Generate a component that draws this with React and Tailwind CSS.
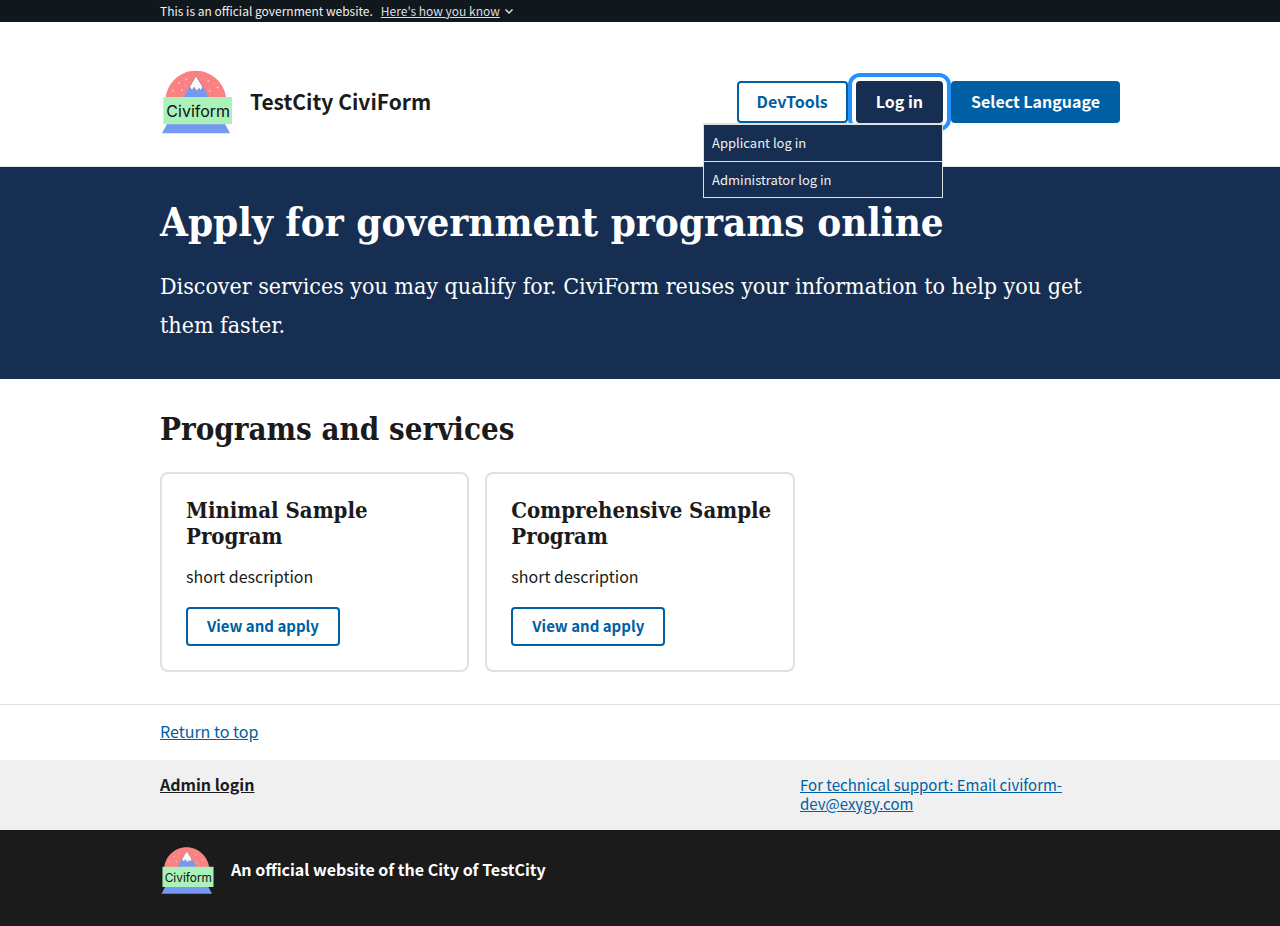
import React from "react";

const sans = "font-['Noto_Sans_CJK_SC',sans-serif]";
const serif = "font-['DejaVu_Serif_Condensed','DejaVu_Serif',serif]";

function Logo({ className }) {
  return (
    <svg viewBox="30 24 222 204" className={className} role="img" aria-label="Civiform logo">
      <path d="M46 124C46 73 87 32 137 32s92 41 92 92z" fill="#fa8283" />
      <path d="M101 111 L121 74 L156 74 L176 111z" fill="#7599f3" />
      <path
        d="M138 47 L119 80 L122 87 L127 90 L132 82 L141 94 L147 85 L153 92 L158 80z"
        fill="#fafafa"
        stroke="#6d6480"
        strokeWidth="1.5"
      />
      <g fill="#fcd9d6">
        <circle cx="109" cy="58" r="2.6" />
        <circle cx="87" cy="69" r="2.6" />
        <circle cx="106" cy="75" r="1.6" />
        <circle cx="69" cy="92" r="2.6" />
        <circle cx="96" cy="91" r="2.6" />
        <circle cx="175" cy="63" r="2.6" />
        <circle cx="203" cy="82" r="2.6" />
        <circle cx="179" cy="93" r="2.6" />
        <circle cx="192" cy="70" r="1.4" />
      </g>
      <path d="M51 192H225L240 220H36z" fill="#7599f3" />
      <path d="M40 111H246V193H40z" fill="#aaf2ba" />
      <text x="49" y="172" fontSize="48" fill="#111" className="font-['Inter',sans-serif]">
        Civiform
      </text>
    </svg>
  );
}

function ProgramCard({ title }) {
  return (
    <li className="flex flex-col items-start rounded-lg border-2 border-[#dfe1e2] pt-[23px] pr-5 pb-6 pl-6">
      <h3 className={`${serif} text-[22px] leading-[26px] font-bold`}>{title}</h3>
      <p className="mt-[15px] text-[16px] leading-6">short description</p>
      <a
        href="#apply"
        className="mt-[19px] rounded border-2 border-[#005ea2] px-[19px] pt-[7px] pb-[9px] text-[15px] leading-[19px] font-bold text-[#005ea2]"
      >
        View and apply
      </a>
    </li>
  );
}

export default function App() {
  return (
    <div id="top" className={`${sans} bg-white text-[#1b1b1b]`}>
      <div className="bg-[#11181d] text-[#f0f0f0]">
        <div className="mx-auto flex max-w-5xl items-center gap-2 px-8 text-[12px] leading-[22px]">
          <p>This is an official government website.</p>
          <button type="button" className="flex items-center gap-1 text-[#dcdee0]">
            <span className="underline">Here's how you know</span>
            <svg viewBox="0 0 10 10" className="size-[10px]" fill="none" stroke="currentColor" strokeWidth="1.5" aria-hidden="true">
              <path d="M1.5 3.5 5 7 8.5 3.5" />
            </svg>
          </button>
        </div>
      </div>

      <header className="border-b border-[#dfe1e2]">
        <div className="mx-auto flex max-w-5xl items-center justify-between px-8 pt-[46px] pb-[30px]">
          <a href="#home" className="flex items-center gap-4">
            <Logo className="h-[68px] w-[74px]" />
            <span className="pb-0.5 text-[21px] leading-8 font-bold">TestCity CiviForm</span>
          </a>
          <nav className="flex gap-2 text-[16px] leading-[18px] font-bold">
            <button type="button" className="rounded border-2 border-[#005ea2] px-[18px] pt-[9px] pb-[11px] text-[#005ea2]">
              DevTools
            </button>
            <div className="relative">
              <button
                type="button"
                aria-expanded="true"
                className="rounded bg-[#162e51] px-5 pt-[11px] pb-[13px] text-white outline-4 outline-offset-4 outline-[#2491ff]"
              >
                Log in
              </button>
              <ul className="absolute top-full right-0 z-10 w-60 border border-t-2 border-[#dfe1e2] bg-[#162e51] text-[13px] leading-5 font-normal text-[#f0f0f0]">
                <li className="border-b border-[#dfe1e2]">
                  <a href="#applicant" className="block p-2">Applicant log in</a>
                </li>
                <li>
                  <a href="#administrator" className="block px-2 pt-2 pb-[7px]">Administrator log in</a>
                </li>
              </ul>
            </div>
            <button type="button" className="rounded bg-[#005ea2] px-5 pt-[11px] pb-[13px] text-white">
              Select Language
            </button>
          </nav>
        </div>
      </header>

      <main>
        <section className={`${serif} bg-[#162e51] text-white`}>
          <div className="mx-auto max-w-5xl px-8 pt-8 pb-[34px]">
            <h1 className="text-[40px] leading-[46px] font-bold">Apply for government programs online</h1>
            <p className="mt-[22px] text-[23px] leading-[39px]">
              Discover services you may qualify for. CiviForm reuses your information to help you get them faster.
            </p>
          </div>
        </section>

        <section className="mx-auto max-w-5xl px-8 pt-8 pb-8">
          <h2 className={`${serif} text-[31px] leading-[37px] font-bold`}>Programs and services</h2>
          <ul className="mt-6 grid grid-cols-3 gap-4">
            <ProgramCard title="Minimal Sample Program" />
            <ProgramCard title="Comprehensive Sample Program" />
          </ul>
        </section>
      </main>

      <footer className="text-[16px] leading-[19px]">
        <div className="border-t border-[#dfe1e2]">
          <div className="mx-auto max-w-5xl px-8 pt-[17px] pb-[19px]">
            <a href="#top" className="text-[#005ea2] underline">Return to top</a>
          </div>
        </div>
        <div className="bg-[#f0f0f0]">
          <div className="mx-auto grid max-w-5xl grid-cols-3 px-8 pt-[15px] pb-[17px]">
            <div className="col-span-2">
              <a href="#admin" className="font-bold underline">Admin login</a>
            </div>
            <a href="#support" className="text-[15px] text-[#005ea2] underline">
              For technical support: Email civiform-dev@exygy.com
            </a>
          </div>
        </div>
        <div className="bg-[#1b1b1b] text-white">
          <div className="mx-auto flex max-w-5xl items-center gap-4 px-8 pt-[15px] pb-[30px]">
            <Logo className="h-[51px] w-[55px]" />
            <p className="pb-0.5 font-bold">An official website of the City of TestCity</p>
          </div>
        </div>
      </footer>
    </div>
  );
}
